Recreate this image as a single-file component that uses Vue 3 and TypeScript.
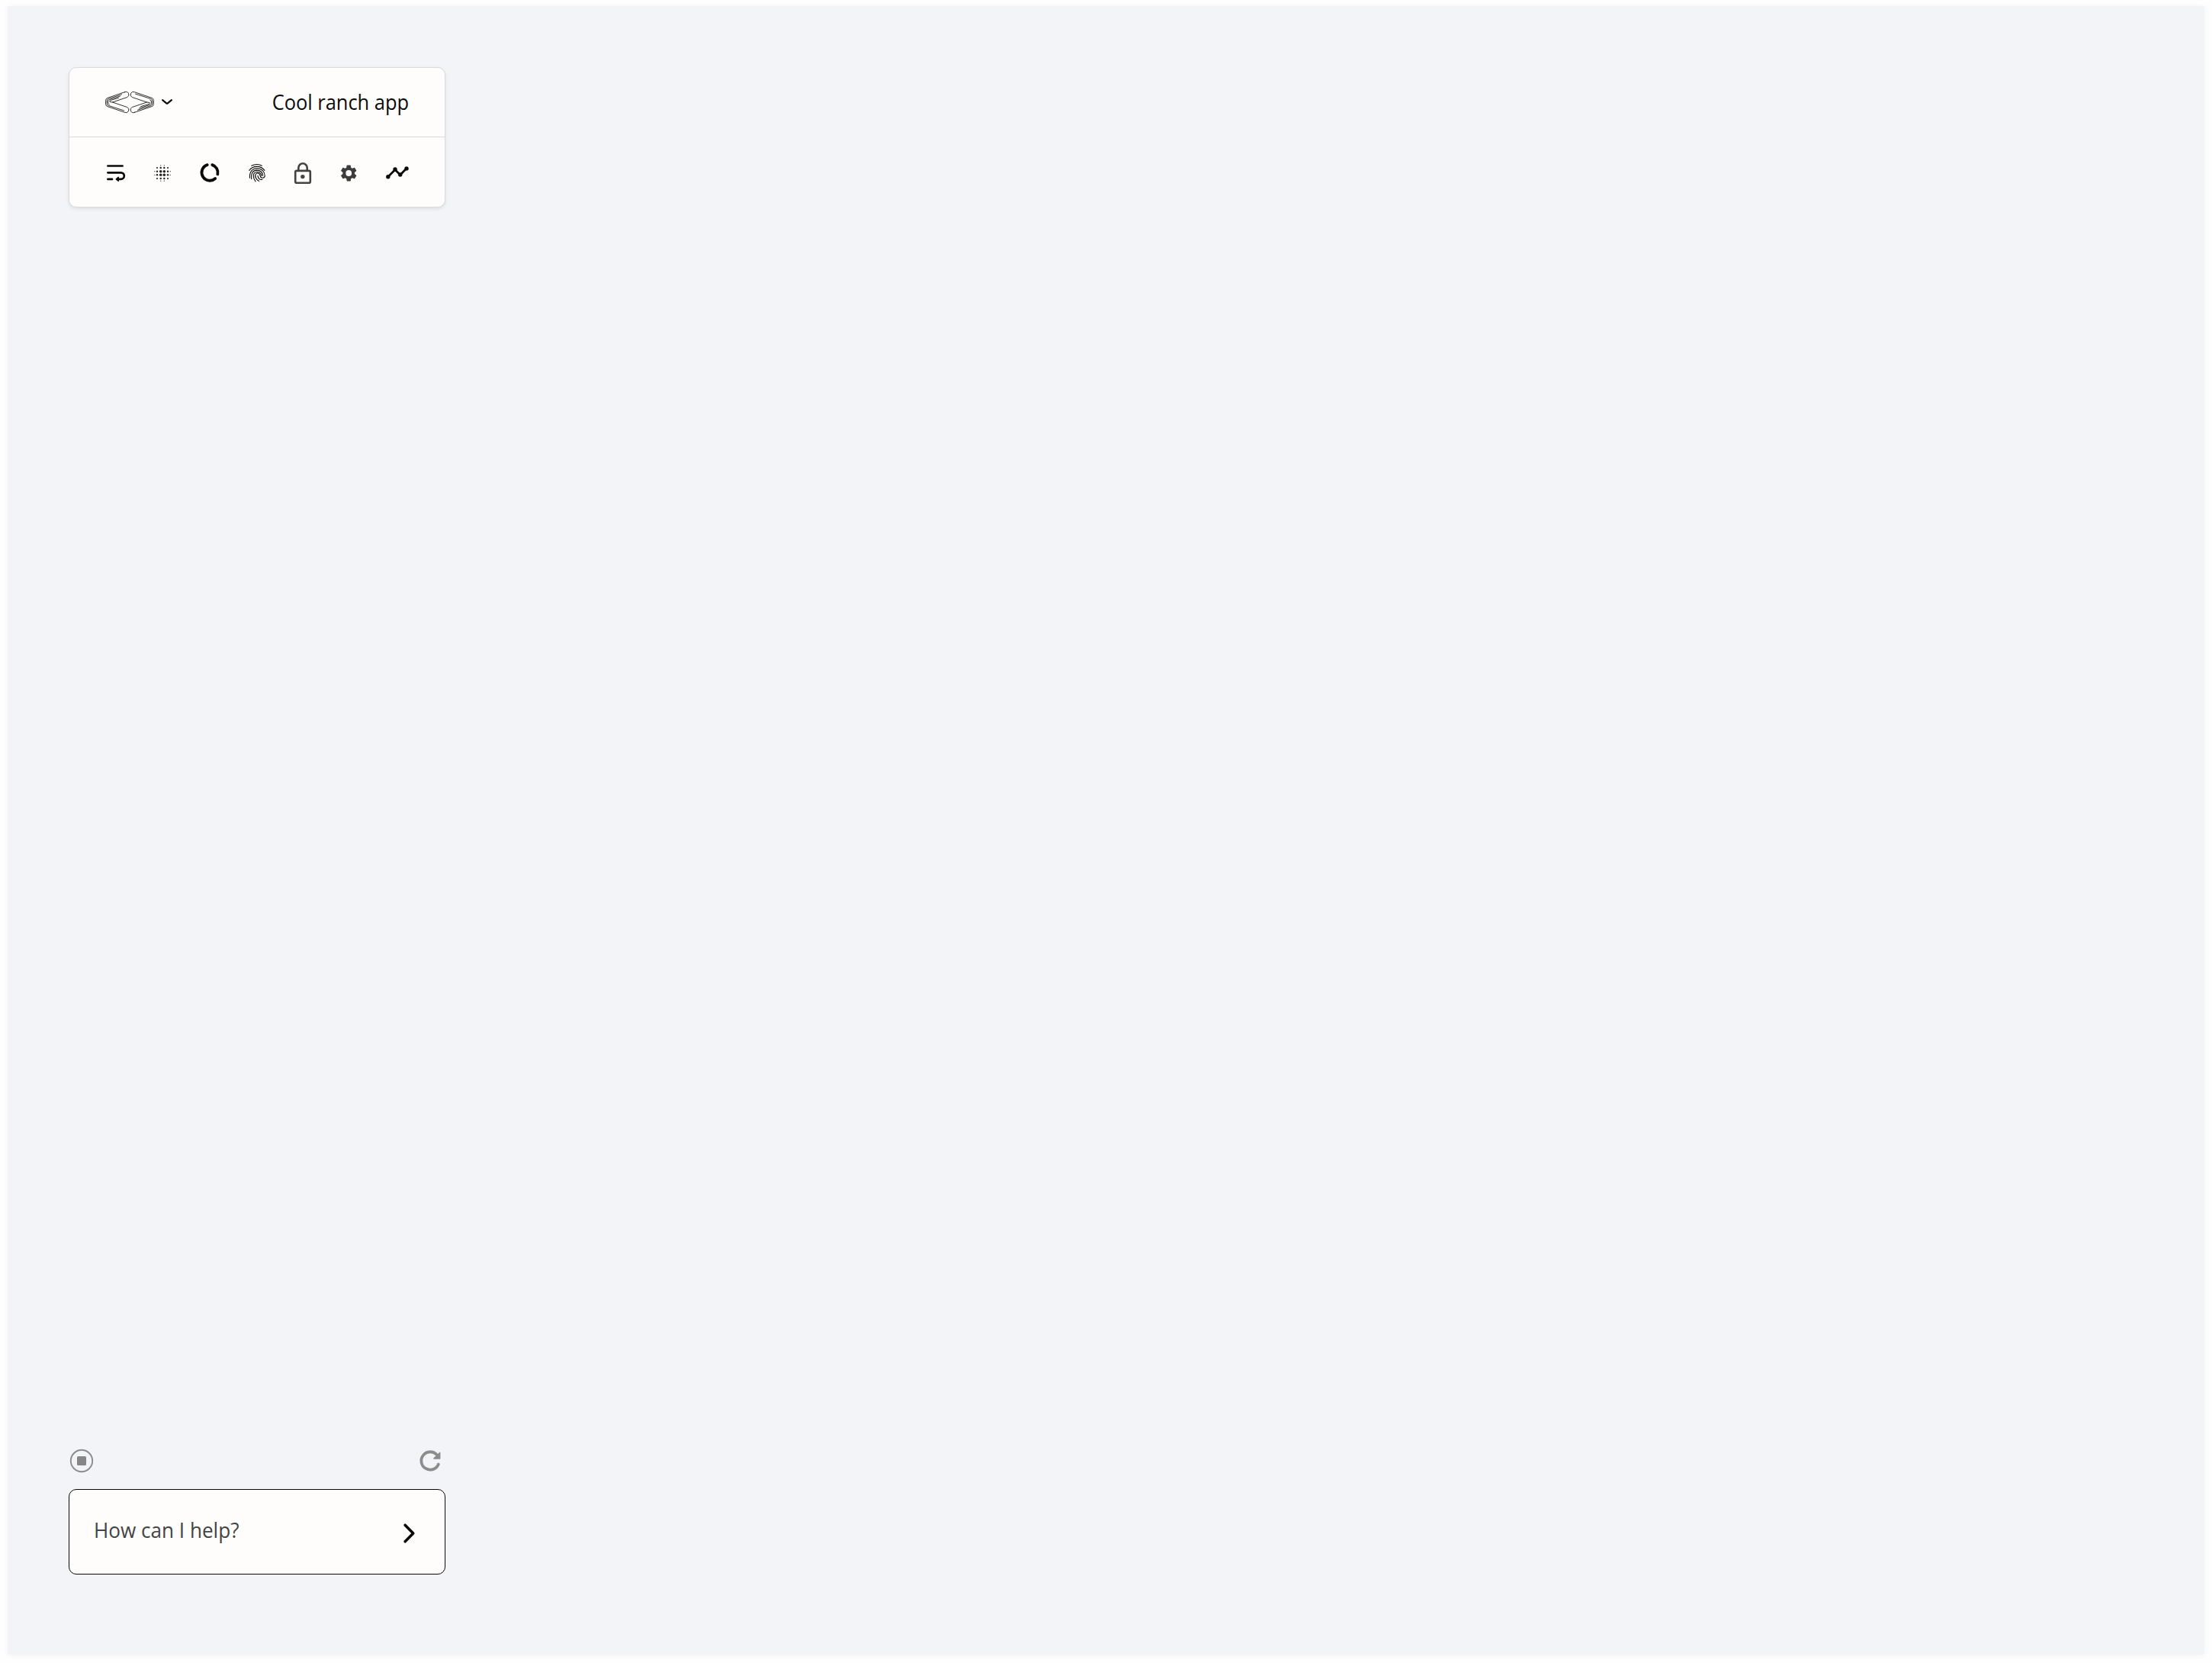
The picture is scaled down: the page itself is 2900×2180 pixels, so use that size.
<script setup lang="ts">
import { ref } from 'vue'

interface Dot { x: number; y: number; r: number }

const title = 'Cool ranch app'
const prompt = ref('How can I help?')

// Halftone grid: dots shrink with distance from the centre
const steps = [0.8, 4, 8.7, 13.3, 18, 21.2]
const radii = [
  [0, 0, 0.6, 0.6, 0, 0],
  [0, 1.05, 1.2, 1.2, 1.05, 0],
  [0.6, 1.2, 1.75, 1.75, 1.2, 0.6],
  [0.6, 1.2, 1.75, 1.75, 1.2, 0.6],
  [0, 1.05, 1.2, 1.2, 1.05, 0],
  [0, 0, 0.6, 0.6, 0, 0],
]
const dots: Dot[] = radii.flatMap((row, j) =>
  row.map((r, i) => ({ x: steps[i], y: steps[j], r })).filter((d) => d.r > 0),
)
</script>

<template>
  <main class="page">
    <div class="canvas">
      <section class="panel">
        <header class="panel-head">
          <button class="brand" aria-label="Menu">
            <svg width="64" height="28" viewBox="0 0 64 28" class="thin">
              <g id="half">
                <path d="M25.500.7 3 8.400Q.6 9.200.6 11.500v5Q.6 18.800 3 19.600L25.500 27.300a3.700 3.700 0 0 0 3.200-6.800L9.500 14 28.700 7.500A3.700 3.700 0 0 0 25.500.7Z" />
                <path d="M21.500 3.800 4.300 9.500Q2.200 10.200 2.200 12v3.800Q2.200 17.800 4.300 18.400L24.500 25" />
                <path d="M19.500 6.100 5.300 10.700Q3.700 11.300 3.700 12.500v2.500Q3.700 16.500 5.300 17.100" />
                <path d="M17.500 8.300 7 11.500Q5 12.200 6 13.500L9.500 14" />
              </g>
              <use href="#half" transform="rotate(180 32 14)" />
            </svg>
            <svg width="14" height="7" viewBox="0 0 14 7" class="chevron">
              <path d="M1.100 1.200 6.200 5.300Q7 5.900 7.800 5.300L12.900 1.200" />
            </svg>
          </button>
          <h1 class="title">{{ title }}</h1>
        </header>
        <nav class="tools">
          <svg width="24" height="22" viewBox="0 0 24 22" class="bold">
            <path d="M1.400 1.500H20.600M1.400 10.300H18.500a4.100 4.100 0 0 1 0 8.600H15M1.400 18.900H7" />
            <path d="M15.200 16.300 12.300 18.900 15.200 21.200Z" class="tip" />
          </svg>
          <svg width="22" height="22" viewBox="0 0 22 22" class="dots">
            <circle v-for="(d, i) in dots" :key="i" :cx="d.x" :cy="d.y" :r="d.r" />
          </svg>
          <svg width="25" height="25" viewBox="0 0 25 25" class="ring">
            <path d="M15.300 2.100A10.600 10.600 0 0 1 22.300 14.400M19.200 20A10.600 10.600 0 1 1 8.700 2.100" />
          </svg>
          <svg width="22" height="24" viewBox="0 0 22 24" class="finger">
            <path d="M3.700 2.300C8 .1 13.500.1 17.300 2.300" />
            <path d="M.8 8.500C5 1.800 16 1.500 20.900 8.400" />
            <path d="M1.500 18.300C.9 11 4.100 5.900 10.600 5.700c6.600 0 10.600 4.400 10.600 9.500 0 3.700-5.400 4.100-6 .4-.5-3.700-4.100-4.500-5.700-2.600-2.200 3 .5 8 4.200 9.400" />
            <path d="M3.700 19.700C2.800 13.500 4.700 8.300 10.600 8.100c4.800 0 7.600 3 7.900 7.100" />
            <path d="M9 22.900C5.400 18.500 5 10.900 10.300 10.500c3.900-.2 6 2.500 6.500 5" />
            <path d="M12 15.400c.2 3.400 2.400 5.400 5.800 5" />
          </svg>
          <svg width="22" height="28" viewBox="0 0 22 28" class="lock">
            <rect x="1.200" y="10.900" width="19.600" height="15.900" rx="1.800" />
            <path d="M5.300 10.500V7a5.600 5.600 0 0 1 11.400 0v3.500" />
            <circle cx="10.800" cy="18.600" r="2.700" />
          </svg>
          <svg width="21" height="22" viewBox="2.600 2 19.400 20" class="gear">
            <path d="M19.140 12.940c.04-.3.060-.61.060-.94s-.02-.64-.07-.94l2.030-1.580a.49.490 0 0 0 .12-.61l-1.920-3.320a.488.488 0 0 0-.59-.22l-2.390.96c-.5-.38-1.030-.7-1.620-.94l-.36-2.540A.484.484 0 0 0 13.920 2.400h-3.840c-.24 0-.43.170-.47.410l-.36 2.540c-.59.240-1.130.57-1.620.94l-2.390-.96c-.22-.08-.47 0-.59.220L2.740 8.870c-.12.210-.08.470.12.610l2.030 1.580c-.05.3-.09.63-.09.940s.02.64.07.940l-2.030 1.580a.49.490 0 0 0-.12.610l1.920 3.320c.12.220.37.290.59.220l2.390-.96c.5.380 1.030.7 1.620.940l.36 2.540c.05.240.24.410.48.410h3.840c.24 0 .44-.17.470-.41l.36-2.540c.59-.24 1.130-.56 1.620-.94l2.390.96c.22.080.47 0 .59-.22l1.920-3.320a.49.490 0 0 0-.12-.61zM12 15.600a3.600 3.600 0 1 1 0-7.200 3.600 3.600 0 0 1 0 7.200z" />
          </svg>
          <svg width="30" height="17" viewBox="0 0 30 17" class="trend">
            <path d="M2.700 13.800 12 4.500 18.700 11.200 26.700 3" />
            <circle cx="2.800" cy="13.700" r="2.700" />
            <circle cx="12" cy="4" r="2.700" />
            <circle cx="18.700" cy="11" r="2.700" />
            <circle cx="27" cy="2.900" r="2.700" />
          </svg>
        </nav>
      </section>

      <section class="chat">
        <div class="controls">
          <svg width="30" height="30" viewBox="0 0 30 30" class="stop">
            <circle cx="15" cy="15" r="14.200" />
            <rect x="9" y="9" width="12" height="12" rx="1.500" />
          </svg>
          <svg width="28" height="28" viewBox="0 0 28 28" class="reload">
            <path d="M24.800 18.500A11.700 11.700 0 1 1 22.600 6" />
            <path d="M26.200 2.800a.7.700 0 0 1 1.200.5V11a.8.800 0 0 1-.8.800H18.800a.7.700 0 0 1-.5-1.200Z" class="head" />
          </svg>
        </div>
        <div class="input">
          <span class="placeholder">{{ prompt }}</span>
          <svg width="15" height="26" viewBox="0 0 15 26" class="send">
            <path d="M2.100 2.200 12.700 13 2.100 23.800" />
          </svg>
        </div>
      </section>
    </div>
  </main>
</template>

<style>
body {
  margin: 0;
  background: #fefefe;
}
</style>

<style scoped>
.page {
  box-sizing: border-box;
  width: 2900px;
  height: 2180px;
  padding: 8px 10px 11px;
  background: #fefefe;
  font-family: "Open Sans", "Noto Sans", sans-serif;
}
.canvas {
  box-sizing: border-box;
  width: 2880px;
  height: 2161px;
  padding: 80px 80px 105px;
  display: flex;
  flex-direction: column;
  justify-content: space-between;
  align-items: flex-start;
  background: #f2f4f8;
  box-shadow: 0 1px 8px rgba(0, 0, 0, 0.05);
}
svg {
  display: block;
  flex: none;
  overflow: visible;
  fill: none;
  stroke-linecap: round;
  stroke-linejoin: round;
}
.panel {
  box-sizing: border-box;
  width: 494px;
  height: 184px;
  border: 1px solid #d9dadc;
  border-radius: 10px;
  background: #fefdfc;
  box-shadow: 0 2px 4px rgba(0, 0, 0, 0.09);
}
.panel-head {
  box-sizing: border-box;
  height: 91px;
  padding: 0 47px;
  display: flex;
  align-items: center;
  justify-content: space-between;
  border-bottom: 1px solid #d9dadc;
}
.brand {
  display: flex;
  align-items: center;
  gap: 10px;
  padding: 0;
  border: 0;
  background: none;
}
.thin {
  stroke: #1b1b1b;
  stroke-width: 0.9;
}
.chevron {
  stroke: #0a0a0a;
  stroke-width: 2.200;
  margin-top: -1px;
}
.title,
.placeholder {
  margin: 0;
  font-size: 27.500px;
  font-weight: 400;
  line-height: 36px;
  white-space: nowrap;
}
.title {
  color: #0a0a0a;
  transform: scaleX(0.924);
  transform-origin: right center;
}
.tools {
  box-sizing: border-box;
  height: 91px;
  padding: 3px 47px 0 49px;
  display: flex;
  align-items: center;
  justify-content: space-between;
}
.bold {
  stroke: #0a0a0a;
  stroke-width: 2.700;
}
.bold .tip {
  fill: #0a0a0a;
  stroke-width: 1.500;
}
.dots {
  fill: #222;
}
.ring {
  stroke: #0a0a0a;
  stroke-width: 3.800;
  margin-top: -1px;
}
.finger {
  stroke: #0a0a0a;
  stroke-width: 1.100;
  margin-top: -1px;
}
.lock {
  stroke: #434343;
  stroke-width: 2.600;
  margin-top: -1px;
}
.lock circle {
  fill: #434343;
  stroke: none;
}
.gear {
  fill: #3c3c3c;
}
.trend {
  stroke: #0a0a0a;
  stroke-width: 2.700;
  margin-top: -2px;
}
.trend circle {
  fill: #0a0a0a;
  stroke: none;
}
.chat {
  width: 494px;
}
.controls {
  display: flex;
  align-items: center;
  justify-content: space-between;
  padding: 0 6px 22px 2px;
}
.stop {
  stroke: #8c8c8c;
  stroke-width: 1.900;
}
.stop rect {
  fill: #868686;
  stroke: none;
}
.reload {
  stroke: #8c8c8c;
  stroke-width: 3.800;
}
.reload .head {
  fill: #8c8c8c;
  stroke: none;
}
.input {
  box-sizing: border-box;
  height: 112px;
  padding: 0 39px 0 32px;
  display: flex;
  align-items: center;
  justify-content: space-between;
  border: 1px solid #0a0a0a;
  border-radius: 10px;
  background: #fefdfc;
}
.placeholder {
  color: #444;
  transform: translateY(-2px) scaleX(0.95);
  transform-origin: left center;
}
.send {
  stroke: #0a0a0a;
  stroke-width: 3.600;
  margin-top: 4px;
}
</style>
